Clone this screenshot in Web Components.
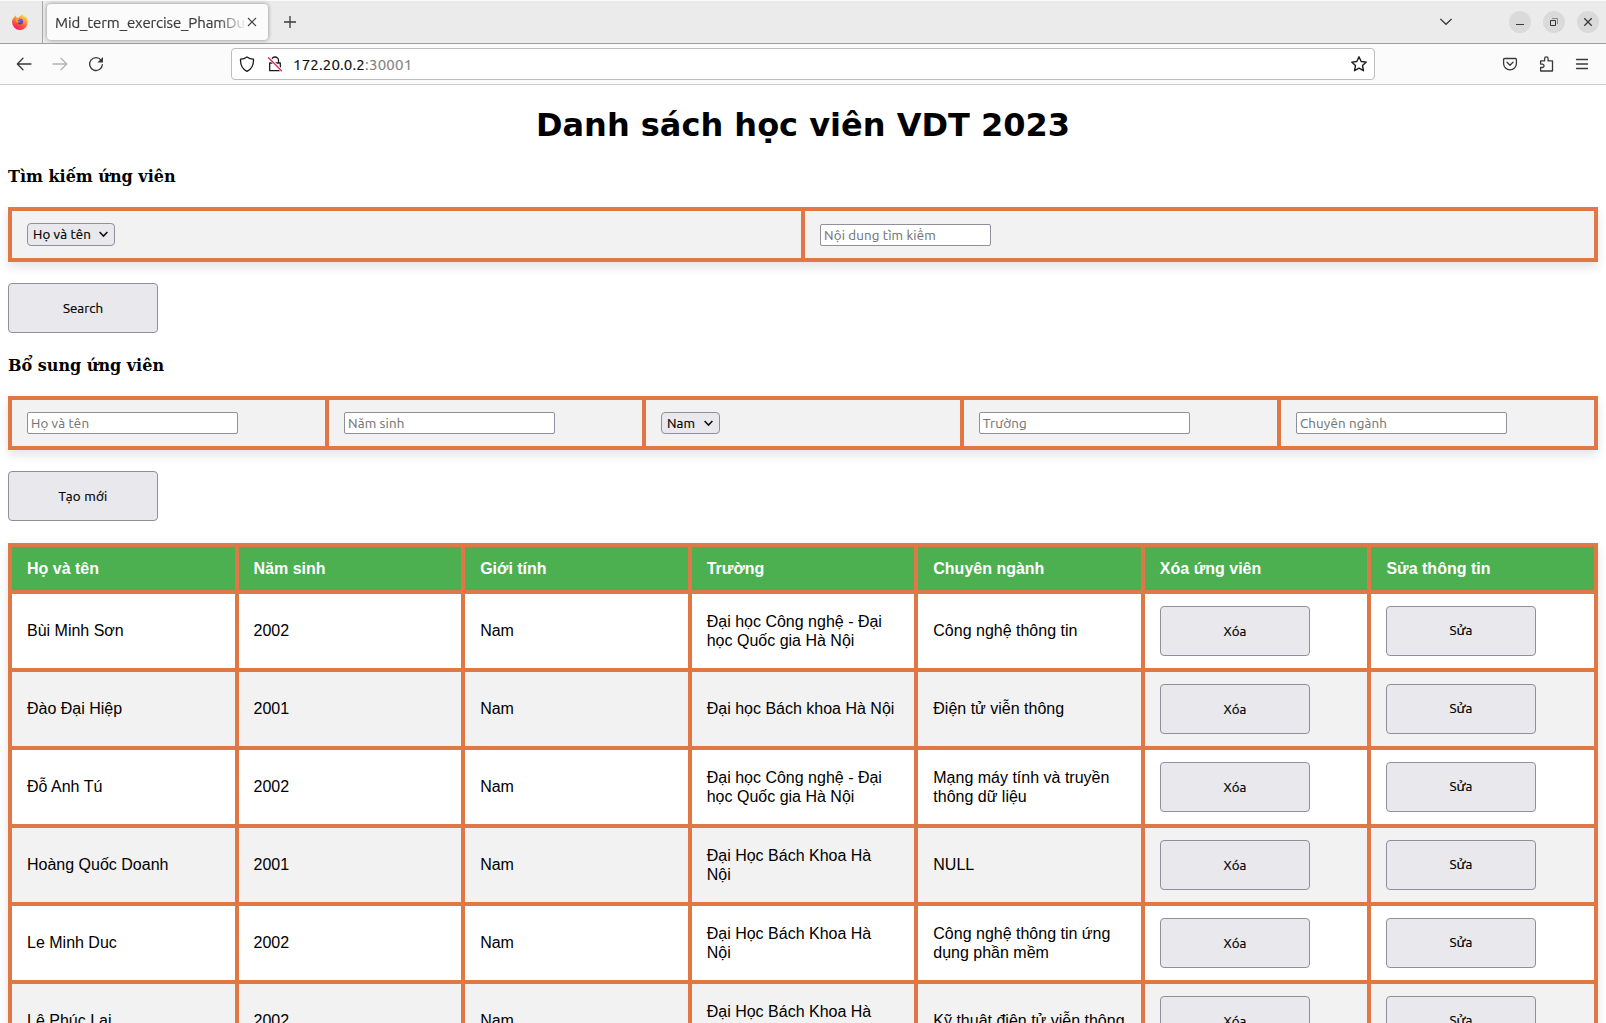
<!DOCTYPE html>
<html lang="vi">
<head>
<meta charset="utf-8">
<title>Mid_term_exercise_PhamDu</title>
<style>
  html, body { margin: 0; height: 100%; overflow: hidden; background: #fff; }
</style>
</head>
<body>
<browser-window>
  <browser-tabs slot="tabs"></browser-tabs>
  <browser-toolbar slot="toolbar"></browser-toolbar>
  <student-page></student-page>
</browser-window>

<script>
const UI = '"Ubuntu", "Noto Sans", sans-serif';

class Base extends HTMLElement {
  connectedCallback() {
    if (this.shadowRoot) return;
    this.attachShadow({ mode: 'open' }).innerHTML =
      `<style>:host,*{box-sizing:border-box}${this.css()}</style>${this.html()}`;
    this.ready();
  }
  ready() {}
}

/* Text of a given advance width: the spacing is spread over its letters. */
class FitText extends Base {
  css() { return `:host{display:inline-block;white-space:pre;font-family:${UI};-webkit-text-stroke:.2px currentColor}`; }
  html() { return '<span><slot></slot></span>'; }
  ready() {
    const want = +this.getAttribute('w');
    if (!want) return;
    const n = this.textContent.length;
    const have = this.shadowRoot.querySelector('span').getBoundingClientRect().width;
    this.style.letterSpacing = ((want - have) / n).toFixed(3) + 'px';
  }
}

class BrowserWindow extends Base {
  css() { return `:host{display:flex;flex-direction:column;height:1023px;width:1606px;overflow:hidden;background:#fff}`; }
  html() { return `<slot name="tabs"></slot><slot name="toolbar"></slot><slot></slot>`; }
}

class BrowserTabs extends Base {
  css() { return `
    :host{display:flex;flex:none;height:44px;background:#ebebeb;border-top:1px solid #fafafa;border-bottom:1px solid #9e9e9e;align-items:stretch}
    .fx{width:43px;border-right:1px solid #a8a8a8;display:flex;align-items:center;padding:0 0 0 12px}
    .tab{width:221px;height:36px;margin:3px 0 0 4px;border-radius:4px;background:#fbfbfb;box-shadow:0 0 4px rgba(0,0,0,.42);display:flex;align-items:center;padding-left:8px}
    .title{width:192px;overflow:hidden;font-size:15px;line-height:20px;padding-top:2px;color:#3b3b3b;-webkit-mask:linear-gradient(90deg,#000 162px,transparent 192px);mask:linear-gradient(90deg,#000 162px,transparent 192px)}
    svg{display:block;flex:none}
    .plus{margin:15px 0 0 16px}
    .sp{flex:1}
    .chev{margin:16px 57px 0 0}
    .c{width:22px;height:22px;border-radius:50%;background:#dadada;margin:10px 12px 0 0}
    .c:last-child{margin-right:7px}`; }
  html() { return `
    <div class="fx"><svg width="16" height="16" viewBox="0 0 16 16">
      <defs><linearGradient id="a" x1=".8" y1="0" x2=".3" y2="1"><stop offset="0" stop-color="#fff14f"/><stop offset=".35" stop-color="#ffa02a"/><stop offset=".7" stop-color="#ff4b3a"/><stop offset="1" stop-color="#f5156c"/></linearGradient>
      <linearGradient id="b" x1="0" y1="0" x2="0" y2="1"><stop offset="0" stop-color="#9059ff"/><stop offset="1" stop-color="#4b3bb8"/></linearGradient></defs>
      <path fill="url(#a)" d="M10.100 0c1.100 1 1.600 1.900 1.800 2.900.3-.2.4-.6.4-1 2 1.200 3.400 3.400 3.400 6.300A7.800 7.800 0 0 1 8 16 7.800 7.800 0 0 1 .1 8.300c0-2 .6-3.600 1.500-4.900 0 .5.1.8.3 1.100.1-1.300.8-2.300 1.800-3 0 .8.2 1.400.7 1.900.7.1 1.700 0 2.500.3C7.200 2.300 8.900 1.800 10.100 0z"/>
      <circle cx="8.100" cy="7.500" r="3" fill="url(#b)"/>
      <path fill="#ffa02a" d="M3.200 5c1.200-.9 3-.9 4.300.4-.7.600-1.700.6-2 1.300 0 1 1.600.8 2.300.3-.1 1.300-1.200 1.700-2.400 1.700-.6-.1-1.100-.6-1.500-1.200z"/>
    </svg></div>
    <div class="tab"><div class="title"><fit-text w="190">Mid_term_exercise_PhamDu</fit-text></div>
      <svg width="10" height="10" viewBox="0 0 10 10" stroke="#444" stroke-width="1.1" fill="none"><path d="M1 1l8 8M9 1L1 9"/></svg></div>
    <svg class="plus" width="12" height="12" viewBox="0 0 12 12" stroke="#3a3a3a" stroke-width="1.3"><path d="M6 0v12M0 6h12"/></svg>
    <div class="sp"></div>
    <svg class="chev" width="12" height="9" viewBox="0 0 12 9" stroke="#3a3a3a" stroke-width="1.300" fill="none"><path d="M.4 1.900L6 7.300l5.600-5.400"/></svg>
    <svg class="c" viewBox="0 0 22 22"><path d="M7 13.500h8" stroke="#3a3a3a"/></svg>
    <svg class="c" viewBox="0 0 22 22" fill="none"><path d="M9 7.500h5.500V13" stroke="#8a8a8a"/><path d="M7.500 9.500h5v5h-5z" stroke="#333"/></svg>
    <svg class="c" viewBox="0 0 22 22" stroke="#3a3a3a" stroke-width="1.300"><path d="M7.300 7.300l7.400 7.400M14.700 7.300l-7.400 7.400"/></svg>`; }
}

class BrowserToolbar extends Base {
  css() { return `
    :host{display:flex;flex:none;height:41px;background:#fbfbfb;border-bottom:1px solid #ccc;align-items:center}
    svg{display:block;flex:none;fill:none;stroke:#3a3a3a;stroke-width:1.300;stroke-linejoin:round;stroke-linecap:round}
    .nav{display:flex;gap:20px;width:231px;padding-left:16px}
    .url{width:1144px;height:32px;border:1px solid #bdbdbd;border-radius:4px;background:#fff;display:flex;align-items:center;padding:0 7px}
    .url svg{stroke:#1c1c1c}
    .url .lock{margin:0 10px 0 12px}
    .text{flex:1;font-size:15px;line-height:20px;padding-top:1px;color:#0c0c0d;white-space:nowrap}
    .port{color:#808080}
    .end{display:flex;gap:20px;margin-left:127px}`; }
  html() { return `
    <div class="nav">
      <svg width="16" height="16" viewBox="0 0 16 16"><path d="M15 8H1.300M7 2.300L1.300 8 7 13.700"/></svg>
      <svg width="16" height="16" viewBox="0 0 16 16" style="stroke:#b4b4b4"><path d="M1 8h13.700M9 2.300L14.700 8 9 13.700"/></svg>
      <svg width="16" height="16" viewBox="0 0 16 16"><path d="M13.200 4.300A6.400 6.400 0 1 0 14.400 8.600"/><path fill="#3a3a3a" stroke="none" d="M15 1v5.600H9.400z"/></svg>
    </div>
    <div class="url">
      <svg width="16" height="16" viewBox="0 0 16 16"><path d="M8 .9c2 1.500 4.200 2.100 6.500 2.200.2 5.400-1.600 9.800-6.500 12.200C3.100 12.900 1.300 8.500 1.500 3.100 3.800 3 6 2.400 8 .9z"/></svg>
      <svg class="lock" width="16" height="16" viewBox="0 0 16 16"><path d="M4.500 7V4.500a3.500 3.500 0 0 1 7 0V7M2.700 7h10.600v7.700H2.700z"/><path stroke="#fff" stroke-width="3" d="M2 2l12.500 12.500"/><path stroke="#e22850" d="M1.500 1.700l13 13"/></svg>
      <div class="text"><fit-text w="72">172.20.0.2</fit-text><fit-text class="port" w="47.500">:30001</fit-text></div>
      <svg width="16" height="16" viewBox="0 0 16 16" style="stroke-width:1.400"><path d="M8 .8l2.200 4.700 5.100.6-3.800 3.500 1 5.100L8 12.200l-4.500 2.500 1-5.100L.7 6.100l5.100-.6z"/></svg>
    </div>
    <div class="end">
      <svg width="16" height="16" viewBox="0 0 16 16"><path d="M2.600 2.500h10.800a1 1 0 0 1 1 1V7.500a6.400 6.400 0 0 1-12.800 0V3.500a1 1 0 0 1 1-1zM5 6.300l3 2.900 3-2.900"/></svg>
      <svg width="16" height="16" viewBox="0 0 16 16"><path d="M2.600 15V11.500H4.300a1.700 1.700 0 0 0 0-3.400H2.600V4.900h4V2.700a1.700 1.700 0 0 1 3.500 0v2.200h4.400V15z"/></svg>
      <svg width="16" height="16" viewBox="0 0 16 16" stroke-linecap="butt"><path d="M2.500 3.500h11M2.500 8h11M2.500 12.500h11"/></svg>
    </div>`; }
}

class UiButton extends Base {
  css() { return `
    :host{display:block;width:150px;height:50px}
    button{width:150px;height:50px;margin:0;padding:0 0 ${this.getAttribute('lift') || 0}px;border:1px solid #8f8f9d;border-radius:4px;background:#e9e9ed;color:#000;font:13.333px/17px ${UI};display:flex;align-items:center;justify-content:center}`; }
  html() { return `<button><fit-text w="${this.getAttribute('w')}">${this.getAttribute('label')}</fit-text></button>`; }
}

class UiSelect extends Base {
  css() { return `
    :host{display:block}
    div{height:${this.getAttribute('h')}px;width:${this.getAttribute('box')}px;border:1px solid #8f8f9d;border-radius:4px;background:#e9e9ed;color:#000;font:13.333px/17px ${UI};display:flex;align-items:center;justify-content:space-between;padding:0 6px 0 5px}
    svg{display:block}`; }
  html() { return `<div><fit-text w="${this.getAttribute('w')}">${this.getAttribute('label')}</fit-text>
    <svg width="9" height="7" viewBox="0 0 9 7" fill="none" stroke="#111" stroke-width="1.600"><path d="M.6 1l3.900 4L8.400 1"/></svg></div>`; }
}

class UiInput extends Base {
  css() { return `
    :host{display:block}
    input{display:block;width:${this.getAttribute('box')}px;height:22px;margin:0;padding:${this.getAttribute('drop') || 0}px 3px 0;border:1px solid #8f8f9d;border-radius:2px;background:#fff;font:13.333px/18px ${UI};letter-spacing:.16px}
    input::placeholder{color:#757575;opacity:1;-webkit-text-stroke:.1px #757575}`; }
  html() { return `<input type="text" placeholder="${this.getAttribute('hint')}">`; }
}

/* Orange gaps between filled cells make the ruled lines. */
class GridBox extends Base {
  css() { return `
    :host{display:grid;gap:4px;padding:4px;background:#e07846;box-shadow:0 5px 10px rgba(0,0,0,.11);
      grid-template-columns:${this.getAttribute('cols')};grid-template-rows:${this.getAttribute('rows')}}`; }
  html() { return '<slot></slot>'; }
}
class GridCell extends Base {
  css() { return `
    :host{display:flex;align-items:center;padding:0 15px;background:#fff;color:#000;font:16px/19px "Liberation Sans",Arial,sans-serif;min-width:0}
    :host([tone=alt]){background:#f2f2f2}
    :host([tone=head]){background:#4caf50;color:#fff;font-weight:700}`; }
  html() { return '<slot></slot>'; }
}

const HEAD = ['Họ và tên','Năm sinh','Giới tính','Trường','Chuyên ngành','Xóa ứng viên','Sửa thông tin'];
/* Text inset per column: the share of a seventh of the width left after rounding the column to whole pixels. */
const INSET = [15, 14.57, 15.14, 14.71, 15.29, 14.86, 15.43];
const ROWS = [
  ['Bùi Minh Sơn','2002','Nam','Đại học Công nghệ - Đại<br>học Quốc gia Hà Nội','Công nghệ thông tin'],
  ['Đào Đại Hiệp','2001','Nam','Đại học Bách khoa Hà Nội','Điện tử viễn thông'],
  ['Đỗ Anh Tú','2002','Nam','Đại học Công nghệ - Đại<br>học Quốc gia Hà Nội','Mạng máy tính và truyền<br>thông dữ liệu'],
  ['Hoàng Quốc Doanh','2001','Nam','Đại Học Bách Khoa Hà<br>Nội','NULL'],
  ['Le Minh Duc','2002','Nam','Đại Học Bách Khoa Hà<br>Nội','Công nghệ thông tin ứng<br>dụng phần mềm'],
  ['Lê Phúc Lai','2002','Nam','Đại Học Bách Khoa Hà<br>Nội','Kỹ thuật điện tử viễn thông']
];

class StudentPage extends Base {
  css() { return `
    :host{display:flex;flex-direction:column;align-items:stretch;flex:1;min-height:0;padding:0 8px;overflow:hidden}
    h1{flex:none;margin:21px 0 0;height:38px;font:bold 32px/38px "DejaVu Sans",sans-serif;text-align:center;color:#000}
    h2{flex:none;margin:0;height:19px;font:bold 16px/19px "DejaVu Serif",serif;color:#000}
    .h-a{margin-top:23px} .h-b{margin-top:23px}
    .t-a{margin-top:21px} .t-b{margin-top:21px} .t-c{margin-top:22px}
    ui-button,grid-box{flex:none}
    .b{margin-top:21px}
    .one{padding-bottom:1px}
    span{white-space:nowrap}`; }
  html() {
    const body = ROWS.map((r, i) => {
      const tone = i % 2 ? ' tone="alt"' : '';
      return r.map((t, c) => `<grid-cell${tone}${t.includes('<br>') ? '' : ' class="one"'} style="padding-left:${INSET[c]}px"><span>${t}</span></grid-cell>`).join('') +
        `<grid-cell${tone}><ui-button label="Xóa" w="23"></ui-button></grid-cell>` +
        `<grid-cell${tone}><ui-button label="Sửa" w="23" lift="2"></ui-button></grid-cell>`;
    }).join('');
    return `
    <h1>Danh sách học viên VDT 2023</h1>
    <h2 class="h-a">Tìm kiếm ứng viên</h2>
    <grid-box class="t-a" cols="789px 789px" rows="47px">
      <grid-cell tone="alt"><ui-select h="23" box="88" w="58" label="Họ và tên"></ui-select></grid-cell>
      <grid-cell tone="alt"><ui-input box="171" drop="1" hint="Nội dung tìm kiếm"></ui-input></grid-cell>
    </grid-box>
    <ui-button class="b" label="Search" w="40"></ui-button>
    <h2 class="h-b">Bổ sung ứng viên</h2>
    <grid-box class="t-b" cols="313px 313px 314px 313px 313px" rows="46px">
      <grid-cell tone="alt"><ui-input box="211" hint="Họ và tên"></ui-input></grid-cell>
      <grid-cell tone="alt"><ui-input box="211" hint="Năm sinh"></ui-input></grid-cell>
      <grid-cell tone="alt"><ui-select h="22" box="59" w="28" label="Nam"></ui-select></grid-cell>
      <grid-cell tone="alt"><ui-input box="211" hint="Trường"></ui-input></grid-cell>
      <grid-cell tone="alt"><ui-input box="211" hint="Chuyên ngành"></ui-input></grid-cell>
    </grid-box>
    <ui-button class="b" label="Tạo mới" w="49"></ui-button>
    <grid-box class="t-c" cols="223px 222px 223px 222px 223px 222px 223px" rows="43px repeat(6,74px)">
      ${HEAD.map((t, c) => `<grid-cell tone="head" style="padding-left:${INSET[c]}px"><span>${t}</span></grid-cell>`).join('')}${body}
    </grid-box>`;
  }
}

for (const [n, c] of Object.entries({
  'fit-text': FitText, 'ui-button': UiButton, 'ui-select': UiSelect, 'ui-input': UiInput,
  'grid-cell': GridCell, 'grid-box': GridBox, 'browser-tabs': BrowserTabs,
  'browser-toolbar': BrowserToolbar, 'student-page': StudentPage, 'browser-window': BrowserWindow
})) customElements.define(n, c);
</script>
</body>
</html>
